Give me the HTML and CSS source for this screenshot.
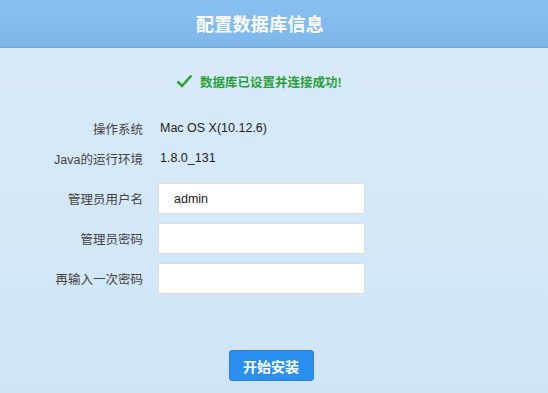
FILE: index.html
```html
<!DOCTYPE html>
<html lang="zh">
<head>
    <meta charset="UTF-8">
    <title>配置数据库信息</title>
    <link rel="stylesheet" href="styles.css">
</head>
<body>
    <div class="header">
        <h1>配置数据库信息</h1>
    </div>

    <div class="content">
        <!-- Success message -->
        <div class="success">
            <svg width="17" height="14" viewBox="0 0 17 14"><path d="M1.5 7.5 L6 12 L15.5 1.5" fill="none" stroke="#25a236" stroke-width="2.5"/></svg>
            <span>数据库已设置并连接成功!</span>
        </div>

        <div class="form">
            <div class="row info">
                <label>操作系统</label>
                <span class="value">Mac OS X(10.12.6)</span>
            </div>
            <div class="row info">
                <label>Java的运行环境</label>
                <span class="value">1.8.0_131</span>
            </div>
            <div class="row first">
                <label for="adminName">管理员用户名</label>
                <input type="text" id="adminName" value="admin">
            </div>
            <div class="row">
                <label for="adminPwd">管理员密码</label>
                <input type="password" id="adminPwd">
            </div>
            <div class="row">
                <label for="adminPwd2">再输入一次密码</label>
                <input type="password" id="adminPwd2">
            </div>
        </div>

        <div class="actions">
            <button class="install-btn">开始安装</button>
        </div>
    </div>
</body>
</html>
```

FILE: styles.css
```css
/* Base */
html, body {
    margin: 0;
    padding: 0;
    height: 100%;
    font-family: "Liberation Sans", "Noto Sans CJK SC", sans-serif;
    background: linear-gradient(#d9ebfa, #cfe5f6);
}

/* Header */
.header {
    height: 48px;
    box-sizing: border-box;
    padding: 0 28px 2px 0;
    background: linear-gradient(#87c0f1, #7fb7eb);
    border-bottom: 1px solid #6aa7de;
    display: flex;
    align-items: center;
    justify-content: center;
}
.header h1 {
    margin: 0;
    color: white;
    font-size: 18px;
    font-weight: bold;
    letter-spacing: 0.3px;
}

/* Success message */
.success {
    display: flex;
    align-items: center;
    gap: 7px;
    height: 18px;
    margin-top: 24px;
    padding-left: 176px;
    color: #2a9f3c;
    font-size: 12.5px;
    font-weight: bold;
}

/* Form rows */
.form {
    margin-top: 23px;
    display: flex;
    flex-direction: column;
}
.row {
    display: flex;
    align-items: center;
    height: 31px;
    margin-bottom: 9px;
}
.row.info {
    height: 30px;
    margin-bottom: 0;
}
.row.first {
    margin-top: 10px;
}
.row label {
    width: 158px;
    text-align: right;
    padding-right: 15px;
    box-sizing: border-box;
    font-size: 12.5px;
    color: #444;
}
.row .value {
    font-size: 12.5px;
    color: #222;
    padding-left: 2px;
}
.row input {
    width: 207px;
    height: 31px;
    box-sizing: border-box;
    border: 1px solid #dcdcdc;
    background-color: white;
    padding: 0 15px;
    font-family: "Liberation Sans", sans-serif;
    font-size: 12.5px;
    color: #222;
    outline: none;
}

/* Install button */
.actions {
    display: flex;
    justify-content: center;
    margin-top: 47px;
    padding-right: 6px;
}
.install-btn {
    width: 85px;
    height: 31px;
    background-color: #2b8ff2;
    border: 1px solid #2a7fd6;
    border-radius: 3px;
    color: white;
    font-family: "Liberation Sans", "Noto Sans CJK SC", sans-serif;
    font-size: 14px;
    font-weight: bold;
    cursor: pointer;
}
```
